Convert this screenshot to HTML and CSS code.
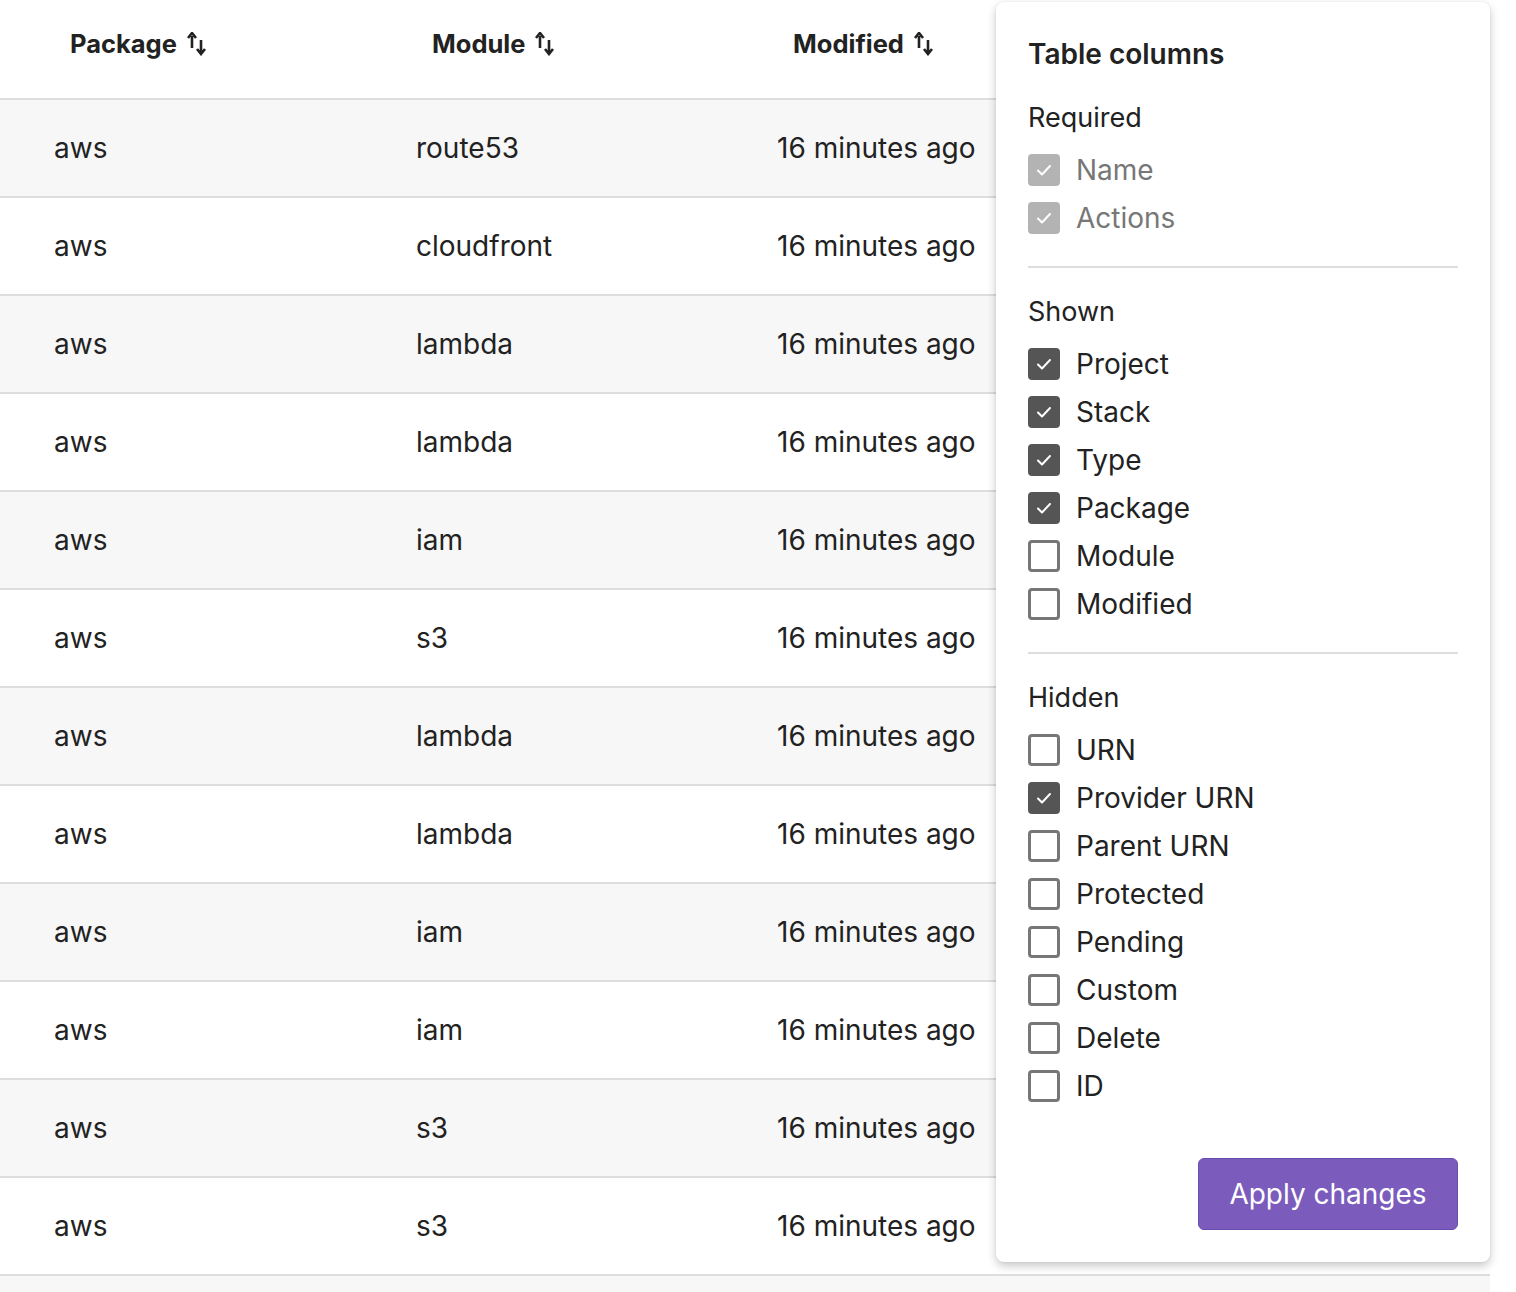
FILE: index.html
```html
<!DOCTYPE html>
<html>
<head>
<meta charset="utf-8">
<link rel="stylesheet" href="styles.css">
</head>
<body>
<div class="page">
  <div class="table">
    <div class="row head">
      <div class="th">Package <svg class="sort" viewBox="0 0 20 24"><path d="M5 4v12M1 6l4-5 4 5M14 8v13M10 17l4 5 4-5"/></svg></div>
      <div class="th">Module <svg class="sort" viewBox="0 0 20 24"><path d="M5 4v12M1 6l4-5 4 5M14 8v13M10 17l4 5 4-5"/></svg></div>
      <div class="th">Modified <svg class="sort" viewBox="0 0 20 24"><path d="M5 4v12M1 6l4-5 4 5M14 8v13M10 17l4 5 4-5"/></svg></div>
      <div class="th"></div>
    </div>
    <div class="row odd"><div class="td">aws</div><div class="td">route53</div><div class="td">16 minutes ago</div><div class="td"></div></div>
    <div class="row"><div class="td">aws</div><div class="td">cloudfront</div><div class="td">16 minutes ago</div><div class="td"></div></div>
    <div class="row odd"><div class="td">aws</div><div class="td">lambda</div><div class="td">16 minutes ago</div><div class="td"></div></div>
    <div class="row"><div class="td">aws</div><div class="td">lambda</div><div class="td">16 minutes ago</div><div class="td"></div></div>
    <div class="row odd"><div class="td">aws</div><div class="td">iam</div><div class="td">16 minutes ago</div><div class="td"></div></div>
    <div class="row"><div class="td">aws</div><div class="td">s3</div><div class="td">16 minutes ago</div><div class="td"></div></div>
    <div class="row odd"><div class="td">aws</div><div class="td">lambda</div><div class="td">16 minutes ago</div><div class="td"></div></div>
    <div class="row"><div class="td">aws</div><div class="td">lambda</div><div class="td">16 minutes ago</div><div class="td"></div></div>
    <div class="row odd"><div class="td">aws</div><div class="td">iam</div><div class="td">16 minutes ago</div><div class="td"></div></div>
    <div class="row"><div class="td">aws</div><div class="td">iam</div><div class="td">16 minutes ago</div><div class="td"></div></div>
    <div class="row odd"><div class="td">aws</div><div class="td">s3</div><div class="td">16 minutes ago</div><div class="td"></div></div>
    <div class="row"><div class="td">aws</div><div class="td">s3</div><div class="td">16 minutes ago</div><div class="td"></div></div>
    <div class="row odd"><div class="td"></div><div class="td"></div><div class="td"></div><div class="td"></div></div>
  </div>

  <div class="panel">
    <div class="title">Table columns</div>

    <div class="group">
      <div class="label">Required</div>
      <div class="opt disabled"><span class="box on"><svg viewBox="0 0 32 32"><path d="M10 16.5l4 4 8-8.5"/></svg></span>Name</div>
      <div class="opt disabled"><span class="box on"><svg viewBox="0 0 32 32"><path d="M10 16.5l4 4 8-8.5"/></svg></span>Actions</div>
    </div>
    <div class="divider"></div>

    <div class="group">
      <div class="label">Shown</div>
      <div class="opt"><span class="box on"><svg viewBox="0 0 32 32"><path d="M10 16.5l4 4 8-8.5"/></svg></span>Project</div>
      <div class="opt"><span class="box on"><svg viewBox="0 0 32 32"><path d="M10 16.5l4 4 8-8.5"/></svg></span>Stack</div>
      <div class="opt"><span class="box on"><svg viewBox="0 0 32 32"><path d="M10 16.5l4 4 8-8.5"/></svg></span>Type</div>
      <div class="opt"><span class="box on"><svg viewBox="0 0 32 32"><path d="M10 16.5l4 4 8-8.5"/></svg></span>Package</div>
      <div class="opt"><span class="box"></span>Module</div>
      <div class="opt"><span class="box"></span>Modified</div>
    </div>
    <div class="divider"></div>

    <div class="group">
      <div class="label">Hidden</div>
      <div class="opt"><span class="box"></span>URN</div>
      <div class="opt"><span class="box on"><svg viewBox="0 0 32 32"><path d="M10 16.5l4 4 8-8.5"/></svg></span>Provider URN</div>
      <div class="opt"><span class="box"></span>Parent URN</div>
      <div class="opt"><span class="box"></span>Protected</div>
      <div class="opt"><span class="box"></span>Pending</div>
      <div class="opt"><span class="box"></span>Custom</div>
      <div class="opt"><span class="box"></span>Delete</div>
      <div class="opt"><span class="box"></span>ID</div>
    </div>

    <div class="actions">
      <button class="apply">Apply changes</button>
    </div>
  </div>
</div>
</body>
</html>
```

FILE: styles.css
```css
html, body {
  margin: 0;
  padding: 0;
  background: #ffffff;
}

body {
  font-family: Inter, "Noto Sans", sans-serif;
  color: #222222;
  overflow: hidden;
}

.page {
  position: relative;
  width: 1516px;
  height: 1292px;
  overflow: hidden;
}

.table {
  width: 1490px;
}

.row {
  display: grid;
  grid-template-columns: 362px 361px 361px 1fr;
  height: 96px;
  border-bottom: 2px solid #dddddd;
  align-items: center;
}

.row.odd {
  background: #f7f7f7;
}

.row.head {
  height: 98px;
  align-items: start;
}

.th {
  padding: 27px 0 0 70px;
  font-size: 25.5px;
  font-weight: 700;
  color: #222;
  display: flex;
  align-items: center;
  gap: 10px;
  line-height: 34px;
}

.sort {
  width: 20px;
  height: 24px;
  fill: none;
  stroke: #222;
  stroke-width: 2.6;
  stroke-linecap: butt;
  stroke-linejoin: miter;
}

.td {
  padding-left: 54px;
  font-size: 28px;
  line-height: 36px;
  color: #222;
}

.panel {
  position: absolute;
  left: 996px;
  top: 2px;
  width: 494px;
  height: 1260px;
  box-sizing: border-box;
  background: #ffffff;
  border-radius: 8px;
  box-shadow: 0 4px 10px rgba(0, 0, 0, 0.22), 0 0 2px rgba(0, 0, 0, 0.08);
  padding: 34px 32px 32px 32px;
  display: flex;
  flex-direction: column;
}

.title {
  font-size: 28px;
  font-weight: 600;
  line-height: 36px;
  color: #222;
  margin-bottom: 28px;
}

.label {
  font-size: 27px;
  line-height: 36px;
  color: #222;
  margin-bottom: 10px;
}

.opt {
  display: flex;
  align-items: center;
  gap: 16px;
  height: 48px;
  font-size: 28px;
  color: #222;
}

.opt.disabled {
  color: #777777;
}

.box {
  width: 32px;
  height: 32px;
  box-sizing: border-box;
  border: 3px solid #777777;
  border-radius: 4px;
  flex: none;
  display: flex;
  align-items: center;
  justify-content: center;
}

.box.on {
  background: #555555;
  border-color: #555555;
}

.opt.disabled .box.on {
  background: #b3b3b3;
  border-color: #b3b3b3;
}

.box svg {
  width: 32px;
  height: 32px;
  flex: none;
  fill: none;
  stroke: #ffffff;
  stroke-width: 2;
  stroke-linecap: round;
  stroke-linejoin: round;
}

.divider {
  height: 2px;
  background: #dddddd;
  margin: 24px 0 26px 0;
}

.actions {
  margin-top: auto;
  display: flex;
  justify-content: flex-end;
}

.apply {
  width: 260px;
  height: 72px;
  background: #7b5cbc;
  border: 1px solid #6a4cae;
  border-radius: 6px;
  color: #ffffff;
  font-family: Inter, "Noto Sans", sans-serif;
  font-size: 28px;
  padding: 0;
}
```
